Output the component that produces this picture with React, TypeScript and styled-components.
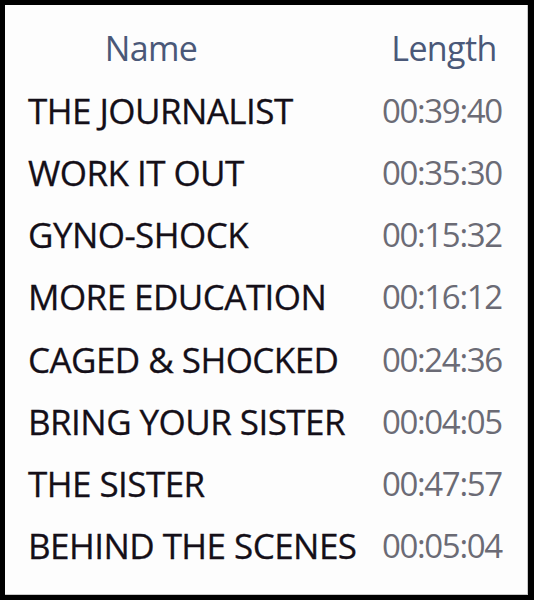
import React from "react";
import styled, { createGlobalStyle } from "styled-components";

const Global = createGlobalStyle`
  html, body { margin: 0; padding: 0; background: #000; }
  body { font-family: "Open Sans", "Noto Sans", sans-serif; }
`;

const Frame = styled.div`
  width: 534px;
  height: 600px;
  box-sizing: border-box;
  background: #000;
  padding: 5px 6px 5px 5px;
`;

const Panel = styled.div`
  height: 100%;
  box-sizing: border-box;
  background: #fdfdfd;
  border-right: 1px solid #c9c9c9;
  border-bottom: 1px solid #c9c9c9;
  padding: 12px 0 0 23px;
`;

const Grid = styled.div`
  display: grid;
  grid-template-columns: 344px 140px;
  column-gap: 10px;
  grid-auto-rows: 62.2px;
  align-items: center;
`;

const HeaderCell = styled.div<{ $shift?: number }>`
  font-size: 34px;
  color: #4a5878;
  text-align: center;
  white-space: nowrap;
  letter-spacing: -0.6px;
  padding-right: ${(p) => p.$shift ?? 0}px;
`;

const NameCell = styled.div`
  font-size: 35px;
  color: #140f18;
  white-space: nowrap;
  letter-spacing: -0.55px;
  -webkit-text-stroke: 0.3px #140f18;
`;

const LengthCell = styled.div`
  font-size: 33px;
  color: #6b6b75;
  white-space: nowrap;
  letter-spacing: -1.35px;
`;

const rows: [string, string][] = [
  ["THE JOURNALIST", "00:39:40"],
  ["WORK IT OUT", "00:35:30"],
  ["GYNO-SHOCK", "00:15:32"],
  ["MORE EDUCATION", "00:16:12"],
  ["CAGED & SHOCKED", "00:24:36"],
  ["BRING YOUR SISTER", "00:04:05"],
  ["THE SISTER", "00:47:57"],
  ["BEHIND THE SCENES", "00:05:04"],
];

export default function App() {
  return (
    <>
      <Global />
      <Frame>
        <Panel>
          <Grid>
            <HeaderCell $shift={98}>Name</HeaderCell>
            <HeaderCell $shift={16}>Length</HeaderCell>
            {rows.map(([n, l]) => (
              <React.Fragment key={n}>
                <NameCell>{n}</NameCell>
                <LengthCell>{l}</LengthCell>
              </React.Fragment>
            ))}
          </Grid>
        </Panel>
      </Frame>
    </>
  );
}
